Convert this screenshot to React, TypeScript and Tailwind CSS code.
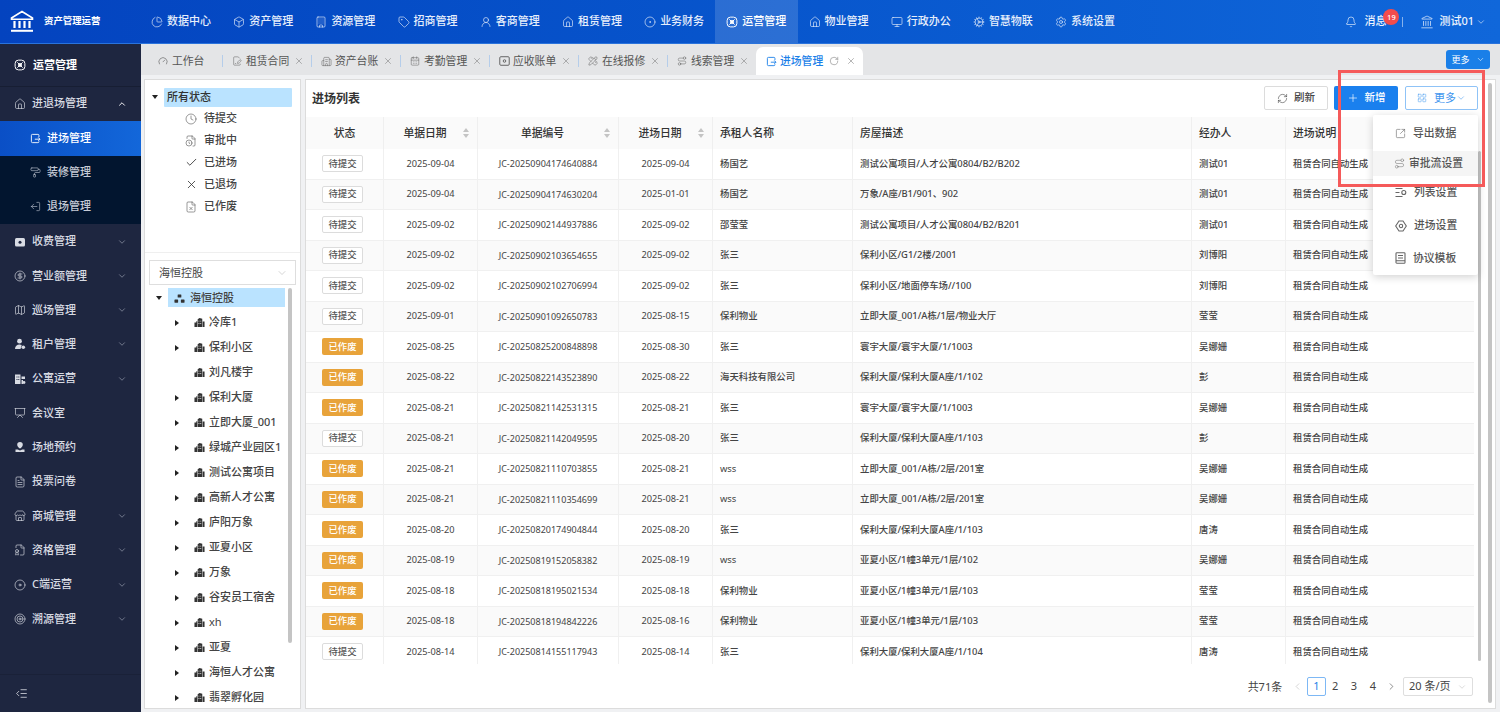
import React from "react";
import {
  ChartPie, Box, Building, Tag, UserRound, House, CircleDot, Monitor, Cog, Settings, Bell, Landmark, ChevronDown, ChevronUp, ChevronLeft, ChevronRight,
  PaintRoller, CircleDollarSign, Map as MapIcon, Presentation, FileText, Store, FileBadge, Disc, Target, IndentDecrease, Clock, FileClock,
  Check, X, FileX, RefreshCw, Plus, LayoutGrid, SquareArrowOutUpRight, Gauge, FileSignature,
  Building2, CalendarDays, PencilRuler, Route, LogOut, RotateCw,
} from "lucide-react";

function OpsIcon({ size = 12 }: { size?: number }) {
  return (
    <svg width={size} height={size} viewBox="0 0 16 16" fill="none" stroke="currentColor" strokeWidth="1.3" className="shrink-0">
      <rect x="1.5" y="1.5" width="13" height="13" rx="4.5" />
      <path d="M4.5 4.5l7 7M11.5 4.5l-7 7" />
      <circle cx="8" cy="8" r="2" />
    </svg>
  );
}

function DocArrow({ size = 11 }: { size?: number }) {
  return (
    <svg width={size} height={size} viewBox="0 0 16 16" fill="none" stroke="currentColor" strokeWidth="1.3" className="shrink-0">
      <path d="M13 6V3.5A1.5 1.5 0 0 0 11.5 2h-8A1.5 1.5 0 0 0 2 3.5v9A1.5 1.5 0 0 0 3.5 14h8a1.5 1.5 0 0 0 1.5-1.5V12" />
      <path d="M7 9h7.5M12 6.5 14.5 9 12 11.5" />
    </svg>
  );
}

function Logo() {
  return (
    <svg width="24" height="23" viewBox="0 0 24 23" fill="none" stroke="currentColor" className="shrink-0">
      <path d="M1.5 8 12 1.5 22.5 8v1.2h-21z" strokeWidth="1.6" />
      <path d="M4.5 11v7M9.5 11v7M14.5 11v7M19.5 11v7" strokeWidth="2.2" />
      <path d="M1 20.8h22" strokeWidth="2" />
    </svg>
  );
}

function FeeIcon() {
  return (
    <svg width="12" height="12" viewBox="0 0 12 12" className="shrink-0">
      <rect x="1" y="2" width="10" height="8.5" rx="1.5" fill="currentColor" />
      <circle cx="6" cy="6.2" r="1.5" fill="#1e2640" />
    </svg>
  );
}

function TenantIcon() {
  return (
    <svg width="12" height="12" viewBox="0 0 12 12" className="shrink-0" fill="currentColor">
      <circle cx="5.5" cy="3.2" r="2.4" />
      <path d="M1 11c0-3 2-4.5 4.5-4.5 1 0 1.6.2 2.2.5L6.5 11z" />
      <circle cx="9.3" cy="9.2" r="1.8" />
    </svg>
  );
}

function ApartIcon() {
  return (
    <svg width="12" height="12" viewBox="0 0 12 12" className="shrink-0" fill="currentColor">
      <path d="M1 11V1.5h5.5V11z" />
      <path d="M7.5 3.5H11v2.5H7.5zM7.5 7H9v4H7.5z" />
      <circle cx="10" cy="9.5" r="1.4" />
      <path d="M2.5 3.5h1v1h-1zM4.3 3.5h1v1h-1zM2.5 6h1v1h-1zM4.3 6h1v1h-1z" fill="#1e2640" />
    </svg>
  );
}

function VenueIcon() {
  return (
    <svg width="12" height="12" viewBox="0 0 12 12" className="shrink-0" fill="currentColor">
      <path d="M6 1a2.8 2.8 0 0 1 2.8 2.8C8.8 5.5 7.2 7 6 7.5 4.8 7 3.2 5.5 3.2 3.8A2.8 2.8 0 0 1 6 1z" />
      <path d="M1.5 8.5h2.3L6 9.5l2.2-1h2.3V11h-9z" />
    </svg>
  );
}

function ReceiptBox() {
  return (
    <svg width="11" height="10" viewBox="0 0 12 11" fill="none" stroke="currentColor" strokeWidth="1.1" className="shrink-0">
      <rect x="0.8" y="0.8" width="10.4" height="9.4" rx="1.2" />
      <circle cx="6" cy="5.5" r="1.4" />
    </svg>
  );
}

function ListGear() {
  return (
    <svg width="12" height="11" viewBox="0 0 12 11" fill="none" stroke="currentColor" strokeWidth="1.1" className="shrink-0">
      <path d="M0.5 1.5h7M0.5 5.5h4M0.5 9.5h7" />
      <circle cx="8.8" cy="5.5" r="2" />
    </svg>
  );
}

function HexGear() {
  return (
    <svg width="12" height="12" viewBox="0 0 12 12" fill="none" stroke="currentColor" strokeWidth="1.1" className="shrink-0">
      <path d="M4 1h4l3.3 5L8 11H4L.7 6z" />
      <circle cx="6" cy="6" r="1.7" />
    </svg>
  );
}

function TemplateDoc() {
  return (
    <svg width="11" height="12" viewBox="0 0 11 12" fill="none" stroke="currentColor" strokeWidth="1.1" className="shrink-0">
      <rect x="1" y="0.8" width="9" height="10.4" rx="0.8" />
      <path d="M3 3.5h5M3 6h5M1 8.7h9" />
    </svg>
  );
}

function CityIcon() {
  return (
    <svg width="11" height="11" viewBox="0 0 12 12" fill="#333" className="shrink-0">
      <path d="M0.5 11V6h2V4.5h1V11zM4 11V2.5L6 1l3 1v9zM9.5 11V5h2v6z" />
      <path d="M5 4h.8v1H5zM7 4h.8v1H7zM5 6.5h.8v1H5zM7 6.5h.8v1H7z" fill="#fff" />
    </svg>
  );
}

function OrgIcon() {
  return (
    <svg width="11" height="11" viewBox="0 0 12 12" fill="#333" className="shrink-0">
      <rect x="4" y="1.5" width="4" height="3.5" rx="0.5" />
      <rect x="0.5" y="7" width="4" height="3.5" rx="0.5" />
      <rect x="7.5" y="7" width="4" height="3.5" rx="0.5" />
    </svg>
  );
}

function Caret({ open }: { open?: boolean }) {
  return open ? (
    <svg width="6" height="4" viewBox="0 0 6 4" fill="#222" className="shrink-0"><path d="M0 0h6L3 4z" /></svg>
  ) : (
    <svg width="4" height="6" viewBox="0 0 4 6" fill="#222" className="shrink-0"><path d="M0 0v6l4-3z" /></svg>
  );
}

function Sort() {
  return (
    <svg width="6" height="10" viewBox="0 0 6 10" fill="#c4c4c4" className="shrink-0">
      <path d="M3 0l3 4H0zM3 10L0 6h6z" />
    </svg>
  );
}

const topNav: [string, React.ReactNode][] = [
  ["数据中心", <ChartPie size={12} strokeWidth={1.3} />],
  ["资产管理", <Box size={12} strokeWidth={1.3} />],
  ["资源管理", <Building size={12} strokeWidth={1.3} />],
  ["招商管理", <Tag size={12} strokeWidth={1.3} />],
  ["客商管理", <UserRound size={12} strokeWidth={1.3} />],
  ["租赁管理", <House size={12} strokeWidth={1.3} />],
  ["业务财务", <CircleDot size={12} strokeWidth={1.3} />],
  ["运营管理", <OpsIcon />],
  ["物业管理", <House size={12} strokeWidth={1.3} />],
  ["行政办公", <Monitor size={12} strokeWidth={1.3} />],
  ["智慧物联", <Cog size={12} strokeWidth={1.3} />],
  ["系统设置", <Settings size={12} strokeWidth={1.3} />],
];

const sideA: [string, React.ReactNode, boolean][] = [
  ["收费管理", <FeeIcon />, true],
  ["营业额管理", <CircleDollarSign size={12} strokeWidth={1.3} />, true],
  ["巡场管理", <MapIcon size={12} strokeWidth={1.3} />, true],
  ["租户管理", <TenantIcon />, true],
  ["公寓运营", <ApartIcon />, true],
  ["会议室", <Presentation size={12} strokeWidth={1.3} />, false],
  ["场地预约", <VenueIcon />, false],
  ["投票问卷", <FileText size={12} strokeWidth={1.3} />, false],
  ["商城管理", <Store size={12} strokeWidth={1.3} />, true],
  ["资格管理", <FileBadge size={12} strokeWidth={1.3} />, true],
  ["C端运营", <Disc size={12} strokeWidth={1.3} />, true],
  ["溯源管理", <Target size={12} strokeWidth={1.3} />, true],
];

const tabs: [string, React.ReactNode][] = [
  ["租赁合同", <FileSignature size={10} strokeWidth={1.3} />],
  ["资产台账", <Building2 size={11} strokeWidth={1.2} />],
  ["考勤管理", <CalendarDays size={10} strokeWidth={1.3} />],
  ["应收账单", <ReceiptBox />],
  ["在线报修", <PencilRuler size={10} strokeWidth={1.3} />],
  ["线索管理", <Route size={10} strokeWidth={1.3} />],
];

const statusTree: [string, React.ReactNode][] = [
  ["待提交", <Clock size={12} strokeWidth={1.2} />],
  ["审批中", <FileClock size={12} strokeWidth={1.2} />],
  ["已进场", <Check size={13} strokeWidth={1.6} className="text-[#333]" />],
  ["已退场", <X size={13} strokeWidth={1.5} className="text-[#333]" />],
  ["已作废", <FileX size={12} strokeWidth={1.2} />],
];

const orgs: [string, boolean][] = [
  ["冷库1", true], ["保利小区", true], ["刘凡楼宇", false], ["保利大厦", true], ["立即大厦_001", true],
  ["绿城产业园区1", true], ["测试公寓项目", true], ["高新人才公寓", true], ["庐阳万象", true], ["亚夏小区", true],
  ["万象", true], ["谷安员工宿舍", true], ["xh", true], ["亚夏", true], ["海恒人才公寓", true], ["翡翠孵化园", true],
];

const rows: string[][] = [
  ["待提交", "2025-09-04", "JC-20250904174640884", "2025-09-04", "杨国艺", "测试公寓项目/人才公寓0804/B2/B202", "测试01"],
  ["待提交", "2025-09-04", "JC-20250904174630204", "2025-01-01", "杨国艺", "万象/A座/B1/901、902", "测试01"],
  ["待提交", "2025-09-02", "JC-20250902144937886", "2025-09-02", "邵莹莹", "测试公寓项目/人才公寓0804/B2/B201", "测试01"],
  ["待提交", "2025-09-02", "JC-20250902103654655", "2025-09-02", "张三", "保利小区/G1/2楼/2001", "刘博阳"],
  ["待提交", "2025-09-02", "JC-20250902102706994", "2025-09-02", "张三", "保利小区/地面停车场//100", "刘博阳"],
  ["待提交", "2025-09-01", "JC-20250901092650783", "2025-08-15", "保利物业", "立即大厦_001/A栋/1层/物业大厅", "莹莹"],
  ["已作废", "2025-08-25", "JC-20250825200848898", "2025-08-30", "张三", "寰宇大厦/寰宇大厦/1/1003", "吴娜姗"],
  ["已作废", "2025-08-22", "JC-20250822143523890", "2025-08-22", "海天科技有限公司", "保利大厦/保利大厦A座/1/102", "彭"],
  ["已作废", "2025-08-21", "JC-20250821142531315", "2025-08-21", "张三", "寰宇大厦/寰宇大厦/1/1003", "吴娜姗"],
  ["待提交", "2025-08-21", "JC-20250821142049595", "2025-08-20", "张三", "保利大厦/保利大厦A座/1/103", "彭"],
  ["已作废", "2025-08-21", "JC-20250821110703855", "2025-08-21", "wss", "立即大厦_001/A栋/2层/201室", "吴娜姗"],
  ["已作废", "2025-08-21", "JC-20250821110354699", "2025-08-21", "wss", "立即大厦_001/A栋/2层/201室", "吴娜姗"],
  ["已作废", "2025-08-20", "JC-20250820174904844", "2025-08-20", "张三", "保利大厦/保利大厦A座/1/103", "唐涛"],
  ["已作废", "2025-08-19", "JC-20250819152058382", "2025-08-19", "wss", "亚夏小区/1幢3单元/1层/102", "吴娜姗"],
  ["已作废", "2025-08-18", "JC-20250818195021534", "2025-08-18", "保利物业", "亚夏小区/1幢3单元/1层/103", "莹莹"],
  ["已作废", "2025-08-18", "JC-20250818194842226", "2025-08-16", "保利物业", "亚夏小区/1幢3单元/1层/103", "莹莹"],
  ["待提交", "2025-08-14", "JC-20250814155117943", "2025-08-14", "张三", "保利大厦/保利大厦A座/1/104", "唐涛"],
];

const menu: [string, React.ReactNode, string][] = [
  ["导出数据", <SquareArrowOutUpRight size={11} strokeWidth={1.3} />, "h-[35px]"],
  ["审批流设置", <Route size={11} strokeWidth={1.2} />, "h-[25px] bg-[#f5f5f5]"],
  ["列表设置", <ListGear />, "h-[33px]"],
  ["进场设置", <HexGear />, "h-[33px]"],
  ["协议模板", <TemplateDoc />, "h-[32px]"],
];

function SideItem({ label, icon, arrow }: { label: string; icon: React.ReactNode; arrow: boolean }) {
  return (
    <div className="flex h-[34.3px] items-center pl-[14px] pr-[14px] text-[11px] font-medium text-[#d8dbe3]">
      <span className="flex w-[18px] shrink-0 items-center text-[#d8dbe3]">{icon}</span>
      <span className="flex-1 whitespace-nowrap">{label}</span>
      {arrow && <ChevronDown size={10} strokeWidth={1.8} className="text-[#8d93a5]" />}
    </div>
  );
}

function SubItem({ label, icon, active }: { label: string; icon: React.ReactNode; active?: boolean }) {
  return (
    <div className={active
      ? "flex h-[34.5px] items-center bg-gradient-to-r from-[#0a4fc6] to-[#1367da] pb-[1px] pl-[30px] text-[11px] font-medium text-white"
      : "flex h-[34.3px] items-center pb-[1px] pl-[30px] text-[11px] font-medium text-[#c6cbd6]"}>
      <span className="flex w-[17px] shrink-0 items-center">{icon}</span>
      {label}
    </div>
  );
}

function Row({ r, i }: { r: string[]; i: number }) {
  const even = i % 2 === 1;
  return (
    <div className={even
      ? "flex h-[30.5px] shrink-0 items-center border-b border-[#f0f0f0] bg-[#fafafa] text-[9.4px] text-[#444]"
      : "flex h-[30.5px] shrink-0 items-center border-b border-[#f0f0f0] bg-white text-[9.4px] text-[#444]"}>
      <div className="flex h-full w-[77px] shrink-0 items-center justify-center pr-[4px]">
        {r[0] === "已作废" ? (
          <span className="flex h-[17px] w-[41px] items-center justify-center rounded-[2px] bg-[#e8a33a] text-[9.4px] font-medium text-white">已作废</span>
        ) : (
          <span className="flex h-[17px] w-[41px] items-center justify-center rounded-[2px] border border-[#dcdcdc] bg-white text-[9.4px] font-medium text-[#555]">待提交</span>
        )}
      </div>
      <div className="flex h-full w-[94px] shrink-0 items-center justify-center border-l border-[#f0f0f0] text-[9.2px]">{r[1]}</div>
      <div className="flex h-full w-[141px] shrink-0 items-center justify-center border-l border-[#f0f0f0] text-[9px]">{r[2]}</div>
      <div className="flex h-full w-[94px] shrink-0 items-center justify-center border-l border-[#f0f0f0] text-[9.2px]">{r[3]}</div>
      <div className={r[4] === "wss"
        ? "flex h-full w-[140px] shrink-0 items-center border-l border-[#f0f0f0] pl-[7px]"
        : "flex h-full w-[140px] shrink-0 items-center border-l border-[#f0f0f0] pl-[7px] font-medium"}>{r[4]}</div>
      <div className="flex h-full w-[339px] shrink-0 items-center border-l border-[#f0f0f0] pl-[7px] font-medium">{r[5]}</div>
      <div className="flex h-full w-[94px] shrink-0 items-center border-l border-[#f0f0f0] pl-[7px] font-medium">{r[6]}</div>
      <div className="flex h-full flex-1 items-center border-l border-[#f0f0f0] pl-[7px] font-medium">租赁合同自动生成</div>
    </div>
  );
}

function Head({ label, w, sort, left }: { label: string; w: string; sort?: boolean; left?: boolean }) {
  return (
    <div className={`relative flex h-full shrink-0 items-center border-l border-[#efefef] ${w} ${left ? "pl-[7px]" : "justify-center"} ${sort ? "pr-[11px]" : ""}`}>
      <span>{label}</span>
      {sort && <span className="absolute right-[8px] flex items-center"><Sort /></span>}
    </div>
  );
}

export default function App() {
  return (
    <div className="relative flex h-[712px] w-[1500px] flex-col overflow-hidden bg-[#f0f1f3] font-['Noto_Sans','Noto_Sans_CJK_SC',sans-serif]">
      <header className="flex h-[44px] shrink-0 items-center border-b border-[#2a73dc] bg-gradient-to-r from-[#0443bf] to-[#1067da] text-white">
        <div className="flex w-[140px] shrink-0 items-center pl-[10px]">
          <Logo />
          <span className="ml-[10px] whitespace-nowrap text-[9.4px] font-bold">资产管理运营</span>
        </div>
        {topNav.map(([t, ic], i) => (
          <div key={t} className={i === 7
            ? "flex h-full w-[82.2px] shrink-0 items-center gap-[4px] bg-white/15 pl-[11px] text-[11px] font-medium whitespace-nowrap"
            : "flex h-full w-[82.2px] shrink-0 items-center gap-[4px] pl-[11px] text-[11px] font-medium whitespace-nowrap text-[#e6eefb]"}>
            <span className="shrink-0">{ic}</span>{t}
          </div>
        ))}
        <div className="ml-auto flex items-center pr-[14px] text-[11px] text-[#eef4fd]">
          <Bell size={12} strokeWidth={1.3} />
          <span className="relative ml-[7px] mr-[16px] whitespace-nowrap font-medium">
            消息
            <span className="absolute left-[19px] top-[-4px] flex h-[16px] w-[16px] items-center justify-center rounded-full bg-[#f24c4c] text-[7.5px] text-white">19</span>
          </span>
          <span className="h-[10px] w-px bg-white/50" />
          <Landmark size={14} strokeWidth={1.2} className="ml-[17px]" />
          <span className="ml-[5px] whitespace-nowrap font-medium">测试01</span>
          <ChevronDown size={10} strokeWidth={1.4} className="ml-[2px]" />
        </div>
      </header>

      <div className="flex min-h-0 flex-1">
        <aside className="flex w-[141px] shrink-0 flex-col bg-[#1e2640]">
          <div className="flex h-[43px] shrink-0 items-center border-b border-[#171e33] pl-[14px] text-[11px] font-bold text-white">
            <span className="flex w-[19px] items-center"><OpsIcon /></span>运营管理
          </div>
          <div className="flex h-[34.3px] shrink-0 items-center pb-[1px] pl-[14px] pr-[14px] text-[11px] font-medium text-[#d8dbe3]">
            <span className="flex w-[18px] items-center"><House size={12} strokeWidth={1.3} /></span>
            <span className="flex-1">进退场管理</span>
            <ChevronUp size={10} strokeWidth={2.2} className="text-white" />
          </div>
          <SubItem label="进场管理" active icon={<DocArrow />} />
          <div className="bg-[#02152f]">
            <SubItem label="装修管理" icon={<PaintRoller size={11} strokeWidth={1.3} />} />
            <SubItem label="退场管理" icon={<LogOut size={11} strokeWidth={1.3} className="-scale-x-100" />} />
          </div>
          {sideA.map(([l, ic, a]) => <SideItem key={l} label={l} icon={ic} arrow={a} />)}
          <div className="mt-auto flex h-[38px] items-center border-t border-[#1a2138] pl-[15px] text-[#e4e6ec]">
            <IndentDecrease size={13} strokeWidth={1.4} />
          </div>
        </aside>

        <main className="flex min-w-0 flex-1 flex-col">
          <div className="flex h-[31px] shrink-0 items-end bg-[#e4e5e7]">
            <div className="flex h-full w-[81px] shrink-0 items-center pl-[17px] pt-[3px] text-[10.8px] text-[#555]">
              <Gauge size={10} strokeWidth={1.4} className="mr-[4px]" />工作台
            </div>
            {tabs.map(([t, ic]) => (
              <div key={t} className="flex h-full w-[89px] shrink-0 items-center pt-[3px]">
                <span className="h-[12px] w-px bg-[#b5cdea]" />
                <span className="ml-[9px] flex w-[14px] shrink-0 items-center text-[#666]">{ic}</span>
                <span className="whitespace-nowrap text-[10.8px] text-[#555]">{t}</span>
                <X size={10} strokeWidth={1.3} className="ml-[5px] text-[#777]" />
              </div>
            ))}
            <div className="mb-0 flex h-[28px] w-[107px] shrink-0 items-center rounded-t-[7px] bg-white pl-[10px] text-[10.8px] font-medium text-[#1a7fe8]">
              <span className="mr-[3px] flex"><DocArrow /></span>进场管理
              <RotateCw size={10} strokeWidth={1.3} className="ml-[6px] text-[#777]" />
              <X size={10} strokeWidth={1.3} className="ml-[7px] text-[#777]" />
            </div>
            <div className="mb-[6px] ml-auto mr-[10px] flex h-[19px] w-[44px] items-center justify-center gap-[6px] rounded-[3px] bg-[#1a7fe8] text-[9px] text-white">
              更多<ChevronDown size={9} strokeWidth={1.5} />
            </div>
          </div>

          <div className="flex min-h-0 flex-1 gap-[4px] pb-[3px] pl-[3px] pr-[4px] pt-[4px]">
            <section className="flex w-[157px] shrink-0 flex-col overflow-hidden border border-[#dcdcdc] bg-white text-[11px] text-[#444]">
              <div className="h-[173px] shrink-0 border-b border-[#efefef] pt-[7px]">
                <div className="flex h-[20.5px] items-center pl-[7px]">
                  <Caret open />
                  <span className="ml-[6px] flex h-[19px] w-[128px] items-center rounded-[1px] bg-[#bae3ff] pl-[3px] font-medium text-[#333]">所有状态</span>
                </div>
                {statusTree.map(([l, ic]) => (
                  <div key={l} className="flex h-[22px] items-center pl-[40px] font-medium">
                    <span className="flex w-[19px] shrink-0 items-center text-[#555]">{ic}</span>{l}
                  </div>
                ))}
              </div>
              <div className="mx-[4px] mt-[7px] flex h-[25px] shrink-0 items-center justify-between border border-[#dedede] pl-[9px] pr-[7px] pt-[1px]">
                海恒控股<ChevronDown size={12} strokeWidth={1} className="text-[#aaa]" />
              </div>
              <div className="mb-[5px] flex min-h-0 flex-1 overflow-hidden">
                <div className="min-w-0 flex-1 overflow-hidden pt-[3px]">
                  <div className="flex h-[19px] items-center pl-[11px]">
                    <Caret open />
                    <span className="ml-[6px] flex h-[19px] flex-1 items-center gap-[5px] bg-[#bae3ff] pl-[6px] pt-[1px] font-medium"><OrgIcon />海恒控股</span>
                  </div>
                  <div className="pt-[3px]">
                    {orgs.map(([o, c]) => (
                      <div key={o} className={o === "xh"
                        ? "flex h-[25px] items-center pl-[30px] whitespace-nowrap"
                        : "flex h-[25px] items-center pl-[30px] whitespace-nowrap font-medium"}>
                        <span className="flex w-[19px] shrink-0 items-center">{c && <Caret />}</span>
                        <span className="mr-[4px] flex"><CityIcon /></span>{o}
                      </div>
                    ))}
                  </div>
                </div>
                <div className="ml-[3px] mr-[8px] mt-[3px] h-[355px] w-[4px] shrink-0 rounded-[2px] bg-[#c4c4c4]" />
              </div>
            </section>

            <section className="flex min-w-0 flex-1 border border-[#dcdcdc] bg-white">
              <div className="flex min-w-0 flex-1 flex-col">
                <div className="flex h-[37px] shrink-0 items-center pl-[6px] pr-[4px]">
                  <span className="text-[12px] font-bold text-[#333]">进场列表</span>
                  <div className="ml-auto mt-[-1px] flex items-center">
                    <div className="flex h-[24px] w-[64px] items-center justify-center gap-[6px] rounded-[2px] border border-[#dcdcdc] text-[10.5px] font-medium text-[#444]">
                      <RefreshCw size={11} strokeWidth={1.3} />刷新
                    </div>
                    <div className="ml-[6px] flex h-[24px] w-[64px] items-center justify-center gap-[6px] rounded-[2px] bg-[#1a80ee] text-[10.5px] font-medium text-white">
                      <Plus size={12} strokeWidth={1.3} />新增
                    </div>
                    <div className="ml-[7px] flex h-[24px] w-[73px] items-center justify-center rounded-[2px] border border-[#8fc3f7] text-[11px] text-[#3f96ee]">
                      <LayoutGrid size={10} strokeWidth={1.2} className="mr-[7px]" />更多<ChevronDown size={10} strokeWidth={1.3} />
                    </div>
                  </div>
                </div>
                <div className="flex min-h-0 flex-1">
                  <div className="flex w-[1168px] shrink-0 flex-col">
                    <div className="h-[547px] shrink-0 overflow-hidden">
                      <div className="flex h-[32px] items-center bg-[#fafafa] text-[10.8px] font-medium text-[#333]">
                        <div className="flex h-full w-[77px] shrink-0 items-center justify-center">状态</div>
                        <Head label="单据日期" w="w-[94px]" sort />
                        <Head label="单据编号" w="w-[141px]" sort />
                        <Head label="进场日期" w="w-[94px]" sort />
                        <Head label="承租人名称" w="w-[140px]" left />
                        <Head label="房屋描述" w="w-[339px]" left />
                        <Head label="经办人" w="w-[94px]" left />
                        <div className="flex h-full flex-1 items-center border-l border-[#efefef] pl-[7px]">进场说明</div>
                      </div>
                      {rows.map((r, i) => <Row key={r[2]} r={r} i={i} />)}
                    </div>
                    <div className="flex flex-1 items-start justify-end pr-[1px] pt-[13px] text-[11px] text-[#444]">
                      <span className="mr-[6px] leading-[19px]">共71条</span>
                      <span className="flex h-[19px] w-[18.8px] items-center justify-center text-[#bbb]"><ChevronLeft size={11} strokeWidth={1.3} /></span>
                      <span className="flex h-[19px] w-[18.8px] items-center justify-center rounded-[2px] border border-[#7db8f5] text-[#1a7fe8]">1</span>
                      <span className="flex h-[19px] w-[18.8px] items-center justify-center">2</span>
                      <span className="flex h-[19px] w-[18.8px] items-center justify-center">3</span>
                      <span className="flex h-[19px] w-[18.8px] items-center justify-center">4</span>
                      <span className="flex h-[19px] w-[18.8px] items-center justify-center"><ChevronRight size={11} strokeWidth={1.3} /></span>
                      <span className="ml-[2px] flex h-[19px] w-[70px] items-center justify-between rounded-[2px] border border-[#dedede] pl-[5px] pr-[5px]">20 条/页<ChevronDown size={10} strokeWidth={1} className="text-[#aaa]" /></span>
                    </div>
                  </div>
                  <div className="ml-[4px] mt-[34px] h-[510px] w-[3px] shrink-0 rounded-[2px] bg-[#c4c4c4]" />
                </div>
              </div>
              <div className="ml-[6px] mr-[3px] mt-[3px] h-[620px] w-[4px] shrink-0 rounded-[2px] bg-[#c4c4c4]" />
            </section>
          </div>
        </main>
      </div>

      <div className="absolute left-[1373px] top-[115px] w-[105px] rounded-[2px] bg-white py-[1px] shadow-[0_2px_8px_rgba(0,0,0,0.18)]">
        {menu.map(([l, ic, cls], i) => (
          <div key={l} className={`flex items-center whitespace-nowrap text-[10.8px] font-medium text-[#555] ${i === 1 ? "pl-[21px]" : "pl-[22px]"} ${cls}`}>
            <span className={i === 1 ? "mr-[4px] flex text-[#777]" : "mr-[7px] flex text-[#666]"}>{ic}</span>{l}
          </div>
        ))}
      </div>
      <div className="pointer-events-none absolute left-[1338px] top-[70px] h-[117px] w-[147px] border-[3px] border-[#f55a5a]" />
    </div>
  );
}
